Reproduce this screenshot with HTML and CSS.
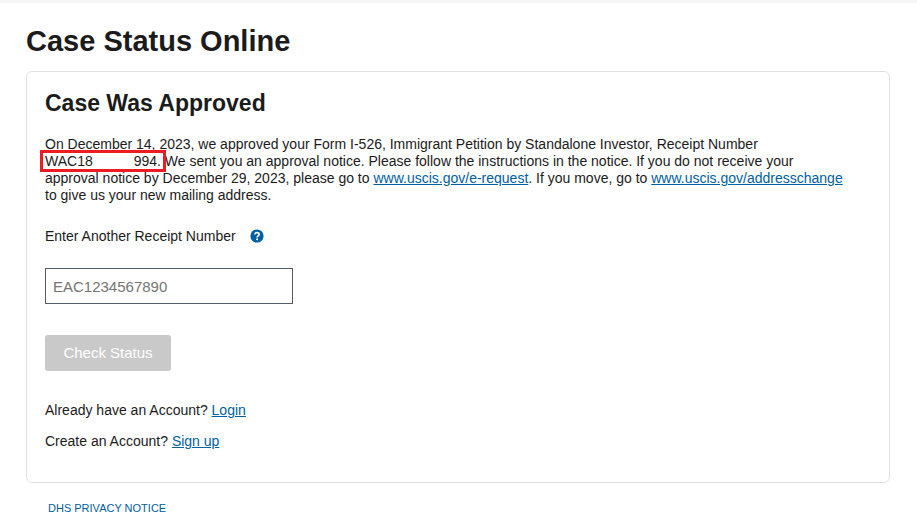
FILE: index.html
```html
<!DOCTYPE html>
<html lang="en">
<head>
  <meta charset="UTF-8" />
  <meta name="viewport" content="width=device-width, initial-scale=1.0" />
  <title>Case Status Online</title>
  <link rel="stylesheet" href="styles.css">
</head>
<body>
  <main class="page">
    <h1>Case Status Online</h1>

    <section class="card">
      <h2>Case Was Approved</h2>
      <p class="message">
        On December 14, 2023, we approved your Form I-526, Immigrant Petition by Standalone Investor, Receipt Number<br>
        <span class="receipt">WAC18<span class="redacted"></span>994.</span>
        We sent you an approval notice. Please follow the instructions in the notice. If you do not receive your<br>
        approval notice by December 29, 2023, please go to <a href="#">www.uscis.gov/e-request</a>. If you move, go to
        <a href="#">www.uscis.gov/addresschange</a><br>
        to give us your new mailing address.
      </p>

      <form>
        <div class="label-row">
          <label for="receipt">Enter Another Receipt Number</label>
          <button type="button" class="help" aria-label="Help">
            <svg viewBox="0 0 14 14" width="14" height="14" aria-hidden="true">
              <circle cx="7" cy="7" r="6.6" fill="#005ea2" />
              <path d="M4.8 5.6C4.8 4.3 5.7 3.6 7 3.6s2.2.7 2.2 1.8c0 1.4-2.1 1.4-2.1 3" fill="none" stroke="#fff" stroke-width="1.6" />
              <circle cx="7.1" cy="10.3" r="1" fill="#fff" />
            </svg>
          </button>
        </div>
        <input type="text" id="receipt" placeholder="EAC1234567890">
        <button type="submit" class="check" disabled>Check Status</button>
      </form>

      <p class="account">Already have an Account? <a href="#">Login</a></p>
      <p class="account">Create an Account? <a href="#">Sign up</a></p>
    </section>

    <footer class="footer">
      <a href="#">DHS PRIVACY NOTICE</a>
    </footer>
  </main>
</body>
</html>
```
FILE: styles.css
```css
* {
  box-sizing: border-box;
}

body {
  margin: 0;
  border-top: 3px solid #f5f5f5;
  background: #fff;
  color: #1b1b1b;
  font-family: "Liberation Sans", Arial, sans-serif;
  font-size: 14px;
  line-height: 17px;
}

.page {
  padding: 20px 27px 0 26px;
}

h1 {
  margin: 0 0 12px;
  font-size: 29px;
  line-height: 36px;
}

h2 {
  margin: 0 0 19px;
  font-size: 23px;
  line-height: 28px;
}

.card {
  padding: 17px 18px;
  border: 1px solid #dfe1e2;
  border-radius: 6px;
}

.message {
  margin: 0 0 22px;
}

a {
  color: #005ea2;
}

.receipt {
  margin: 0 -2px;
  padding: 0 2px;
  white-space: nowrap;
  outline: 3px solid #ed1c24;
}

.redacted {
  display: inline-block;
  width: 41px;
}

.label-row {
  display: flex;
  align-items: center;
  gap: 14px;
  height: 20px;
}

.help {
  display: flex;
  padding: 0;
  border: 0;
  background: none;
  cursor: pointer;
}

input {
  display: block;
  width: 248px;
  height: 36px;
  margin: 22px 0 31px;
  padding: 0 7px;
  border: 1px solid #565c65;
  font: 15px "Liberation Sans", Arial, sans-serif;
}

input::placeholder {
  color: #757575;
}

.check {
  display: block;
  width: 126px;
  height: 36px;
  margin-bottom: 31px;
  padding: 0 0 2px;
  border: 0;
  border-radius: 3px;
  background: #c9c9c9;
  color: #fff;
  font: 15px "Liberation Sans", Arial, sans-serif;
}

.account {
  margin: 0 0 14px;
}

.card .account:last-child {
  margin-bottom: 15px;
}

.footer {
  padding: 17px 22px 0;
  font-size: 11px;
}

.footer a {
  text-decoration: none;
}
```
